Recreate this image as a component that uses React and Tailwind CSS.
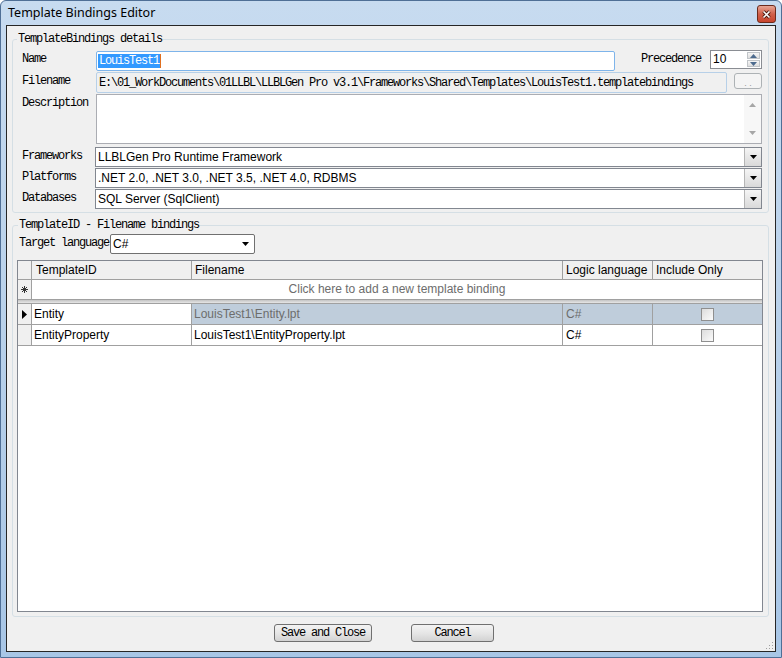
import React from "react";

const mono = "font-['Liberation_Mono',monospace] text-[12px] tracking-[-1.2px] text-black whitespace-nowrap";
const sans = "font-['Liberation_Sans',Arial,sans-serif] text-[12px]";

function Tri({ up = false, color = "#000" }) {
    return (
        <svg width="7" height="4" viewBox="0 0 7 4">
            {up ? <path d="M0 4 L3.5 0 L7 4 Z" fill={color} /> : <path d="M0 0 L7 0 L3.5 4 Z" fill={color} />}
        </svg>
    );
}

function Combo({ text, className = "" }) {
    return (
        <div className={`flex h-[20px] border border-[#828790] bg-white ${className}`}>
            <div className={`flex-1 pl-[2px] leading-[18px] text-black ${sans}`}>{text}</div>
            <div className="w-[17px] border-l border-[#b5b5b5] bg-gradient-to-b from-[#f5f5f5] to-[#d9d9d9] flex items-center justify-center">
                <Tri />
            </div>
        </div>
    );
}

function Label({ children, className = "" }) {
    return <div className={`shrink-0 pt-[3px] leading-[12px] ${mono} ${className}`}>{children}</div>;
}

function Check() {
    return <div className="w-[13px] h-[13px] border border-[#8f8f8f] bg-gradient-to-br from-[#dcdcdc] to-[#fbfbfb]" />;
}

function Row({ header, cells, selected }) {
    const dim = selected ? "bg-[#bfcddb] text-[#6d6d6d]" : "bg-white text-black";
    return (
        <div className={`flex h-[21px] border-b border-[#a0a0a0] ${sans}`}>
            <div className="w-[14px] bg-[#f0f0f0] border-r border-[#a0a0a0] flex items-center justify-center">{header}</div>
            <div className="w-[160px] border-r border-[#a0a0a0] bg-white text-black pl-[2px] leading-[20px]">{cells[0]}</div>
            <div className={`w-[371px] border-r border-[#a0a0a0] pl-[2px] leading-[20px] ${dim}`}>{cells[1]}</div>
            <div className={`w-[90px] border-r border-[#a0a0a0] pl-[3px] leading-[20px] ${dim}`}>{cells[2]}</div>
            <div className={`w-[109px] flex items-center justify-center ${selected ? "bg-[#bfcddb]" : "bg-white"}`}>
                <Check />
            </div>
        </div>
    );
}

function Button({ children, className = "" }) {
    return (
        <div className={`h-[18px] border border-[#707070] rounded-[3px] bg-gradient-to-b from-[#f3f3f3] via-[#e6e6e6] to-[#d2d2d2] flex items-center justify-center leading-[12px] ${mono} ${className}`}>
            {children}
        </div>
    );
}

export default function App() {
    return (
        <div className="w-[782px] h-[658px] flex flex-col border border-[#4f6f96] rounded-t-[6px] bg-gradient-to-b from-[#c7dbf0] via-[#b9d1ea] to-[#a8c6e6] overflow-hidden">
            {/* Title bar */}
            <div className="h-[24px] shrink-0 flex items-start pl-[7px] pr-[5px]">
                <div className="pt-[4px] text-[12.5px] leading-[16px] text-black font-['Noto_Sans','Noto_Sans_CJK_SC',sans-serif]">Template Bindings Editor</div>
                <div className="ml-auto mt-[4px] w-[19px] h-[18px] rounded-[3px] border border-[#6b2a1c] bg-gradient-to-b from-[#e7a594] via-[#d0604a] to-[#c9452e] flex items-center justify-center">
                    <svg width="9" height="9" viewBox="0 0 9 9">
                        <path d="M1.5 1.5 L7.5 7.5 M7.5 1.5 L1.5 7.5" stroke="#4a1a10" strokeWidth="3.4" />
                        <path d="M1.5 1.5 L7.5 7.5 M7.5 1.5 L1.5 7.5" stroke="#ffffff" strokeWidth="1.6" />
                    </svg>
                </div>
            </div>

            {/* Client area */}
            <div className="flex-1 mx-[5px] mb-[5px] border border-[#262626] bg-[#f0f0f0] flex flex-col">
                {/* TemplateBindings details */}
                <fieldset className="mt-[7px] ml-[5px] mr-[6px] pl-[5px] pr-[6px] pb-[3px] border border-[#d5dfe5] rounded-[3px]">
                    <legend className={`px-[1px] -ml-[1px] leading-[12px] ${mono}`}>TemplateBindings details</legend>
                    <div className="pl-[4px] flex flex-col">
                        <div className="mt-[5px] flex items-start h-[21px]">
                            <Label className="w-[74px]">Name</Label>
                            <div className="mt-[1px] w-[519px] h-[20px] border border-[#7eb4ea] rounded-[2px] bg-white flex items-center pl-[1px]">
                                <span className={`bg-[#3399ff] !text-white px-[1px] leading-[14px] ${mono}`}>LouisTest1</span>
                                <span className="w-[1px] h-[14px] bg-[#e07020]" />
                            </div>
                            <Label className="ml-[26px]">Precedence</Label>
                            <div className="ml-[9px] w-[52px] h-[19px] border border-[#8a8d93] bg-white flex">
                                <div className={`flex-1 pl-[2px] leading-[17px] text-black ${sans}`}>10</div>
                                <div className="w-[15px] flex flex-col gap-[1px] p-[1px]">
                                    <div className="flex-1 border border-[#c0c4c8] bg-gradient-to-b from-[#f6f6f6] to-[#dedede] flex items-center justify-center">
                                        <Tri up color="#4d6b8e" />
                                    </div>
                                    <div className="flex-1 border border-[#c0c4c8] bg-gradient-to-b from-[#f6f6f6] to-[#dedede] flex items-center justify-center">
                                        <Tri color="#4d6b8e" />
                                    </div>
                                </div>
                            </div>
                        </div>

                        <div className="mt-[1px] flex items-start h-[21px]">
                            <Label className="w-[74px]">Filename</Label>
                            <div className="w-[631px] h-[21px] border border-[#b7d0e8] rounded-[2px] bg-[#f0f0f0] flex items-center pl-[2px] overflow-hidden">
                                <span className={`leading-[14px] ${mono}`}>E:\01_WorkDocuments\01LLBL\LLBLGen Pro v3.1\Frameworks\Shared\Templates\LouisTest1.templatebindings</span>
                            </div>
                            <div className="ml-[7px] mt-[1px] w-[28px] h-[16px] border border-[#adb2b5] rounded-[3px] bg-[#f4f4f4] flex items-center justify-center text-[#9a9a9a] text-[9px] leading-[10px] font-['Liberation_Sans',sans-serif] pt-[3px]">. .</div>
                        </div>

                        <div className="mt-[1px] flex items-start h-[50px]">
                            <Label className="w-[74px]">Description</Label>
                            <div className="w-[666px] h-[50px] border border-[#abadb3] bg-white flex">
                                <div className="flex-1" />
                                <div className="w-[17px] bg-[#f7f7f7] flex flex-col justify-between items-center py-[8px]">
                                    <Tri up color="#a6a6a6" />
                                    <Tri color="#a6a6a6" />
                                </div>
                            </div>
                        </div>

                        <div className="mt-[3px] flex items-start">
                            <Label className="w-[73px]">Frameworks</Label>
                            <Combo className="w-[667px]" text="LLBLGen Pro Runtime Framework" />
                        </div>
                        <div className="mt-[1px] flex items-start">
                            <Label className="w-[73px]">Platforms</Label>
                            <Combo className="w-[667px]" text=".NET 2.0, .NET 3.0, .NET 3.5, .NET 4.0, RDBMS" />
                        </div>
                        <div className="mt-[1px] flex items-start">
                            <Label className="w-[73px]">Databases</Label>
                            <Combo className="w-[667px]" text="SQL Server (SqlClient)" />
                        </div>
                    </div>
                </fieldset>

                {/* TemplateID - Filename bindings */}
                <fieldset className="mt-[6px] ml-[5px] mr-[6px] pl-[4px] pr-[4px] pb-[4px] border border-[#d5dfe5] rounded-[3px]">
                    <legend className={`px-[1px] ml-[1px] leading-[12px] ${mono}`}>TemplateID - Filename bindings</legend>
                    <div className="mt-[3px] flex items-start">
                        <Label className="ml-[2px] w-[91px]">Target language</Label>
                        <div className="w-[145px] h-[20px] border border-[#707070] rounded-[2px] bg-white flex items-center">
                            <div className={`flex-1 pl-[2px] leading-[18px] text-black ${sans}`}>C#</div>
                            <div className="w-[17px] flex items-center justify-center">
                                <Tri />
                            </div>
                        </div>
                    </div>

                    <div className="mt-[6px] w-[746px] h-[352px] border border-[#828790] bg-white flex flex-col">
                        <div className={`flex h-[19px] border-b border-[#a0a0a0] bg-[#f0f0f0] text-black ${sans}`}>
                            <div className="w-[14px] border-r border-[#a0a0a0]" />
                            <div className="w-[160px] border-r border-[#a0a0a0] pl-[4px] leading-[18px]">TemplateID</div>
                            <div className="w-[371px] border-r border-[#a0a0a0] pl-[3px] leading-[18px]">Filename</div>
                            <div className="w-[90px] border-r border-[#a0a0a0] pl-[3px] leading-[18px]">Logic language</div>
                            <div className="w-[109px] pl-[3px] leading-[18px]">Include Only</div>
                        </div>
                        <div className={`flex h-[20px] border-b border-[#a0a0a0] ${sans}`}>
                            <div className="w-[14px] bg-[#f0f0f0] border-r border-[#a0a0a0] flex items-center justify-center">
                                <svg width="7" height="7" viewBox="0 0 7 7">
                                    <path d="M3.5 0 V7 M0 3.5 H7 M1 1 L6 6 M6 1 L1 6" stroke="#333" strokeWidth="1" />
                                </svg>
                            </div>
                            <div className="flex-1 text-center leading-[19px] text-[#6d6d6d]">Click here to add a new template binding</div>
                        </div>
                        <div className="h-[4px] bg-gradient-to-b from-[#c4c4c4] to-[#e6e6e6] border-b border-[#a0a0a0]" />
                        <Row
                            selected
                            header={
                                <svg width="5" height="9" viewBox="0 0 5 9">
                                    <path d="M0 0 L5 4.5 L0 9 Z" fill="#000" />
                                </svg>
                            }
                            cells={["Entity", "LouisTest1\\Entity.lpt", "C#"]}
                        />
                        <Row cells={["EntityProperty", "LouisTest1\\EntityProperty.lpt", "C#"]} />
                    </div>
                </fieldset>

                {/* Buttons */}
                <div className="mt-[7px] flex items-start pl-[267px] flex-1">
                    <Button className="w-[98px]">Save and Close</Button>
                    <Button className="ml-[39px] w-[83px]">Cancel</Button>
                    <div className="ml-auto self-end mb-[1px] mr-[1px]">
                        <svg width="9" height="9" viewBox="0 0 9 9">
                            <rect x="7" y="1" width="1" height="1" fill="#a0a0a0" />
                            <rect x="4" y="4" width="1" height="1" fill="#a0a0a0" />
                            <rect x="7" y="4" width="1" height="1" fill="#a0a0a0" />
                            <rect x="1" y="7" width="1" height="1" fill="#a0a0a0" />
                            <rect x="4" y="7" width="1" height="1" fill="#a0a0a0" />
                            <rect x="7" y="7" width="1" height="1" fill="#a0a0a0" />
                        </svg>
                    </div>
                </div>
            </div>
        </div>
    );
}
